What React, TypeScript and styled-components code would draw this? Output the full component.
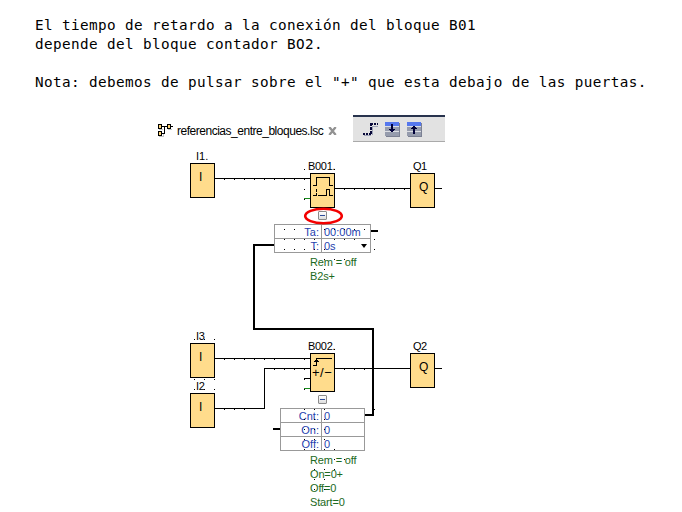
import React from "react";
import styled, { createGlobalStyle } from "styled-components";

const GlobalStyle = createGlobalStyle`
  body { margin: 0; background: #fff; overflow: hidden; }
`;

const CANVAS_TOP = 145;

const Page = styled.main`
  width: 682px;
  height: 512px;
  display: flex;
  flex-direction: column;
  overflow: hidden;
  background: #fff;
`;

const Notes = styled.header`
  height: 99px;
  padding: 16px 0 0 35px;
  box-sizing: content-box;
  font-family: "DejaVu Sans Mono", monospace;
  font-size: 14.3px;
  letter-spacing: 0.39px;
  line-height: 19px;
  color: #000;
  white-space: pre;
`;

const NoteLine = styled.p`
  margin: 0;
  height: 19px;
`;

const TabBar = styled.div`
  display: flex;
  align-items: flex-start;
  height: 30px;
  padding-left: 158px;
`;

const Tab = styled.div`
  display: flex;
  align-items: center;
  width: 195px;
  height: 32px;
`;

const TabTitle = styled.span<{ $width: number }>`
  width: ${(p) => p.$width}px;
  margin-left: 4px;
  margin-right: 5px;
  font: 12px/16px "Liberation Sans", sans-serif;
  letter-spacing: -0.48px;
  white-space: nowrap;
  color: #000;
`;

const Toolbar = styled.div`
  display: flex;
  gap: 7px;
  box-sizing: border-box;
  width: 92px;
  height: 27px;
  padding: 5px 0 0 9px;
  border-top: 2px solid #28334d;
  border-bottom: 1px solid #aaa;
  background: #e2e2e2;
`;

const Canvas = styled.section`
  position: relative;
  flex: 1;
  font-family: "Liberation Sans", sans-serif;
  font-size: 11px;
`;

const Layer = styled.svg`
  position: absolute;
  inset: 0;
  display: block;
  pointer-events: none;
`;

const at = (y: number) => y - CANVAS_TOP;

const Block = styled.div<{ $x: number; $y: number; $h?: number }>`
  position: absolute;
  left: ${(p) => p.$x}px;
  top: ${(p) => at(p.$y)}px;
  width: 25px;
  height: ${(p) => p.$h ?? 35}px;
  box-sizing: border-box;
  border: 1px solid #000;
  background: #ffdc8c;
`;

const BlockLetter = styled.span<{ $left: number; $top: number }>`
  display: block;
  padding: ${(p) => p.$top}px 0 0 ${(p) => p.$left}px;
  font-size: 12px;
  line-height: 14px;
`;

const Sign = styled.span`
  display: block;
  padding: 11px 0 0 1px;
  font-size: 13px;
  line-height: 16px;
  letter-spacing: 0.5px;
  white-space: nowrap;
`;

const NodeLabel = styled.span<{ $x: number; $y: number; $spacing?: number }>`
  position: absolute;
  left: ${(p) => p.$x}px;
  top: ${(p) => at(p.$y) - 10}px;
  line-height: 12px;
  letter-spacing: ${(p) => p.$spacing ?? 0}px;
  white-space: nowrap;
  color: #000;
`;

const Params = styled.div<{ $x: number; $y: number; $label: number; $value: number }>`
  position: absolute;
  left: ${(p) => p.$x}px;
  top: ${(p) => at(p.$y)}px;
  display: grid;
  grid-template-columns: ${(p) => p.$label}px ${(p) => p.$value}px;
  grid-auto-rows: 13px;
  gap: 1px;
  padding: 1px;
  background: #999;
  color: #1f3fae;
  line-height: 14px;
`;

const ParamName = styled.span`
  padding-right: 2px;
  text-align: right;
  background: #fff;
`;

const ParamValue = styled.span`
  display: flex;
  justify-content: space-between;
  align-items: center;
  padding: 0 3px 0 2px;
  background: #fff;
`;

const Caret = styled.i`
  border: 3px solid transparent;
  border-top: 4px solid #000;
  border-bottom: 0;
`;

const Info = styled.div<{ $y: number }>`
  position: absolute;
  left: 310px;
  top: ${(p) => at(p.$y)}px;
  display: flex;
  flex-direction: column;
  line-height: 14px;
  letter-spacing: -0.15px;
  color: #1c6a22;
  white-space: pre;
`;

const Toggle = styled.button<{ $y: number }>`
  position: absolute;
  left: 318px;
  top: ${(p) => at(p.$y)}px;
  display: flex;
  align-items: center;
  justify-content: center;
  width: 9px;
  height: 9px;
  padding: 0;
  border: 1px solid #8b8b8b;
  border-radius: 1px;
  background: linear-gradient(#fff, #ddd);

  &::after {
    content: "";
    width: 5px;
    height: 1px;
    background: #2d4c9b;
  }
`;

const DiagramIcon = () => (
  <svg width="15" height="14" viewBox="0 0 15 14" shapeRendering="crispEdges">
    <path d="M1 5.500H5M10 5.500H14M1 12.500H5.500V9" stroke="#c4c4c4" fill="none" />
    <path d="M3 2.500H15M6.500 2.500V9.500M3 9.500H7" stroke="#000" fill="none" />
    <g fill="#000">
      <rect x="0" y="0" width="4" height="5" />
      <rect x="0" y="7" width="4" height="5" />
      <rect x="9" y="0" width="4" height="5" />
    </g>
    <g fill="#ffd77a">
      <rect x="1" y="1" width="2" height="3" />
      <rect x="1" y="8" width="2" height="3" />
      <rect x="10" y="1" width="2" height="3" />
    </g>
  </svg>
);

const CloseIcon = () => (
  <svg width="9" height="8" viewBox="0 0 9 8">
    <path d="M1.300 0 7.700 8M7.700 0 1.300 8" stroke="#929292" strokeWidth="2.300" />
  </svg>
);

const StepIcon = () => (
  <svg width="16" height="15" viewBox="0 0 16 15" shapeRendering="crispEdges">
    <path d="M2 13.500H9M10.500 13V4M10 4.500H16" stroke="#a0a5b8" fill="none" />
    <path d="M1 12H9M9 2H16" stroke="#080838" strokeWidth="2" strokeDasharray="2 1" fill="none" />
    <path d="M9 1V13" stroke="#080838" strokeWidth="2" strokeDasharray="3 1" fill="none" />
  </svg>
);

const PanelIcon = ({ up }: { up?: boolean }) => (
  <svg width="15" height="15" viewBox="0 0 15 15" shapeRendering="crispEdges">
    <path d="M1 1H15V15H1z" fill="#7b8093" />
    <path d="M0 0H14V14H0z" fill="#dcdee4" />
    <path d="M0 0H14V4H0z" fill="#5577ee" />
    <path d="M0 5H14V9H0zM0 10H14V14H0z" fill="#969cad" />
    <g transform={up ? "matrix(1 0 0 -1 0 14)" : undefined} fill="#000038">
      <path d="M6 2H8V7H10V8H9V9H8V10H6V9H5V8H4V7H6z" />
    </g>
  </svg>
);

const dotRows: [number, number[]][] = [
  [169, [304, 334]],
  [179, [224, 234, 244, 254, 264, 274, 284, 294, 304]],
  [189, [304, 344, 354, 364, 374, 384, 394, 404]],
  [199, [304]],
  [229, [284, 294, 324, 334, 344, 354, 364]],
  [239, [284, 294, 304, 314, 334, 344, 354, 374]],
  [249, [284, 294, 304, 314, 324, 374]],
  [259, [324, 334, 344]],
  [269, [314, 324]],
  [339, [194, 204, 214]],
  [349, [334]],
  [359, [224, 234, 244, 254, 264, 274, 304]],
  [369, [274, 284, 294, 304, 344, 354, 364]],
  [379, [194, 204, 214, 304]],
  [389, [194, 204, 214, 304]],
  [409, [224, 234, 244, 304, 314, 324, 374]],
  [419, [304, 314, 324]],
  [429, [304, 314, 324]],
  [439, [304, 314, 324]],
  [449, [304, 314, 324, 334]],
  [459, [334, 344]],
  [469, [314, 324, 334]],
  [479, [314, 324]],
  [489, [314, 324]],
];

const Wires = () => (
  <Layer width="682" height="367" viewBox={`0 ${CANVAS_TOP} 682 367`} shapeRendering="crispEdges">
    <g fill="none" stroke="#000">
      <path d="M215 178.500H310M335 188.500H410M435 188.500H442" />
      <path d="M215 358.500H310M215 408.500H264.500V368.500H310M304 378.500H310" />
      <path d="M335 368.500H410M435 368.500H442" />
      <path d="M304 198.500H310M304 388.500H310" stroke="#188a1c" />
      <path d="M274 245H254V329H373V415H365M370 231H378M273 429H281" strokeWidth="2" />
    </g>
  </Layer>
);

const Overlay = () => (
  <Layer width="682" height="367" viewBox={`0 ${CANVAS_TOP} 682 367`}>
    <g shapeRendering="crispEdges">
      {dotRows.map(([y, xs]) => xs.map((x) => <rect key={`${x}-${y}`} x={x} y={y} width="1" height="1" />))}
      <g fill="none" stroke="#000">
        <path d="M313 185.500H316.500V177.500H329.500V185.500H333" />
        <path d="M313 195.500H317M318 195.500H326.500V189.500H329.500V195.500H333" />
        <path d="M316.500 189V196" strokeDasharray="3 1" />
        <path d="M313 365.500H316.500V358.500H332M314 361.500H319M315 360.500H318" />
      </g>
    </g>
    <ellipse cx="323.500" cy="216" rx="18.300" ry="7.300" fill="none" stroke="#f30000" strokeWidth="2.600" />
  </Layer>
);

export default function App() {
  return (
    <>
      <GlobalStyle />
      <Page>
        <Notes>
          <NoteLine>El tiempo de retardo a la conexión del bloque B01</NoteLine>
          <NoteLine>depende del bloque contador BO2.</NoteLine>
          <NoteLine />
          <NoteLine>Nota: debemos de pulsar sobre el "+" que esta debajo de las puertas.</NoteLine>
        </Notes>
        <TabBar>
          <Tab>
            <DiagramIcon />
            <TabTitle $width={146}>referencias_entre_bloques.lsc</TabTitle>
            <CloseIcon />
          </Tab>
          <Toolbar>
            <StepIcon />
            <PanelIcon />
            <PanelIcon up />
          </Toolbar>
        </TabBar>
        <Canvas>
          <Wires />
          <NodeLabel $x={196} $y={160}>I1.</NodeLabel>
          <Block $x={190} $y={163}><BlockLetter $left={8} $top={6}>I</BlockLetter></Block>
          <NodeLabel $x={308} $y={170} $spacing={-0.3}>B001.</NodeLabel>
          <Block $x={310} $y={173} />
          <NodeLabel $x={413} $y={170} $spacing={-0.5}>Q1</NodeLabel>
          <Block $x={410} $y={173}><BlockLetter $left={8} $top={6}>Q</BlockLetter></Block>
          <Toggle $y={211} aria-label="B001" />
          <Params $x={274} $y={224} $label={46} $value={48}>
            <ParamName>Ta:</ParamName>
            <ParamValue>00:00m</ParamValue>
            <ParamName>T:</ParamName>
            <ParamValue>0s<Caret /></ParamValue>
          </Params>
          <Info $y={255}>
            <span>Rem = off</span>
            <span>B2s+</span>
          </Info>

          <NodeLabel $x={196} $y={340} $spacing={-0.2}>I3</NodeLabel>
          <Block $x={190} $y={343}><BlockLetter $left={8} $top={6}>I</BlockLetter></Block>
          <NodeLabel $x={196} $y={390} $spacing={-0.2}>I2</NodeLabel>
          <Block $x={190} $y={393}><BlockLetter $left={8} $top={6}>I</BlockLetter></Block>
          <NodeLabel $x={308} $y={350} $spacing={-0.3}>B002.</NodeLabel>
          <Block $x={310} $y={353} $h={39}><Sign>+/−</Sign></Block>
          <NodeLabel $x={413} $y={350} $spacing={-0.5}>Q2</NodeLabel>
          <Block $x={410} $y={353}><BlockLetter $left={8} $top={6}>Q</BlockLetter></Block>
          <Toggle $y={395} aria-label="B002" />
          <Params $x={280} $y={408} $label={40} $value={42}>
            <ParamName>Cnt:</ParamName>
            <ParamValue>0</ParamValue>
            <ParamName>On:</ParamName>
            <ParamValue>0</ParamValue>
            <ParamName>Off:</ParamName>
            <ParamValue>0</ParamValue>
          </Params>
          <Info $y={453}>
            <span>Rem = off</span>
            <span>On=0+</span>
            <span>Off=0</span>
            <span>Start=0</span>
          </Info>
          <Overlay />
        </Canvas>
      </Page>
    </>
  );
}
